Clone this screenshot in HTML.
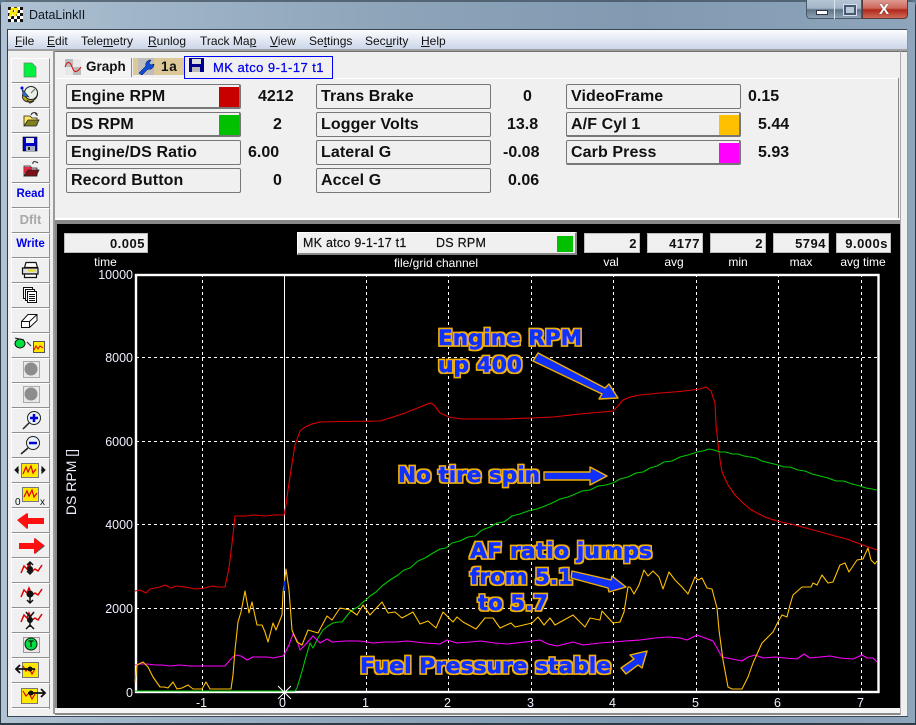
<!DOCTYPE html>
<html><head><meta charset="utf-8"><title>DataLinkII</title>
<style>
html,body{margin:0;padding:0;width:916px;height:725px;overflow:hidden;background:#5f7a94;font-family:"Liberation Sans",sans-serif}
#w{position:absolute;left:0;top:0;width:916px;height:725px;overflow:hidden;border-radius:7px 7px 0 0;background:linear-gradient(90deg,#b0c3d4 0,#a0b5c8 15%,#8ca3b8 45%,#819ab1 70%,#8ea5bb 100%)}
.a{position:absolute}
.t{position:absolute;white-space:nowrap;line-height:1}
.m{position:absolute;top:34px;font-size:12px;line-height:14px;color:#111;white-space:nowrap}
.m u{text-decoration:underline}
.b{position:absolute;left:11px;width:37px;height:23px;background:#f0f0f0;border-top:1px solid #fff;border-left:1px solid #fff;border-right:1px solid #909090;border-bottom:2px solid #909090;box-sizing:content-box}
.c{position:absolute;width:173px;height:23px;background:#f0f0f0;border:1px solid #777;border-radius:2px;box-sizing:content-box}
.c.p{border-bottom:2px solid #777;border-right:2px solid #777;height:22px;width:172px}
.l{position:absolute;font-weight:bold;font-size:16px;line-height:16px;color:#111;white-space:nowrap;letter-spacing:.1px}
.s{position:absolute;width:20px;height:20px;top:87px;left:219px}
.v{position:absolute;font-weight:bold;font-size:16px;line-height:16px;color:#111;white-space:nowrap;text-align:right}
.st{position:absolute;top:233px;height:20px;background:#f0f0f0;border:1px solid #bbb;box-sizing:border-box;font-size:13px;font-weight:bold;text-align:right;line-height:19px;padding-right:2px;color:#111;letter-spacing:.5px}
.w{position:absolute;color:#fff;font-size:12px;line-height:12px;white-space:nowrap;text-align:center}
.y{position:absolute;color:#eef;font-size:12.5px;line-height:12px;right:783px;white-space:nowrap}
.x{position:absolute;top:697px;color:#eef;font-size:12.5px;line-height:12px;white-space:nowrap}
.rd{position:absolute;left:11px;width:39px;text-align:center;font-weight:bold;font-size:11.5px;line-height:12px;color:#0000e8}
</style></head><body>
<div id="w">
<!-- title -->
<div class="a" style="left:0;top:0;width:916px;height:2px;background:#3b4a58;opacity:.7"></div>
<div class="a" style="left:0;top:0;width:1px;height:725px;background:#2e3a46"></div>
<div class="a" style="left:915px;top:0;width:1px;height:725px;background:#2e3a46"></div>
<div class="a" style="left:0;top:723px;width:916px;height:2px;background:#2e3a46"></div>
<div class="t" style="left:29px;top:9px;font-size:12.5px;color:#101820">DataLinkII</div>
<!-- caption buttons -->
<div class="a" style="left:806px;top:0;width:56px;height:19px;border:1px solid #4a5a6a;border-top:none;border-radius:0 0 0 4px;box-sizing:border-box;background:linear-gradient(#b4c5d5 0,#a4b6c8 45%,#5f7488 55%,#8ea3b6 100%)"></div>
<div class="a" style="left:834px;top:0;width:1px;height:19px;background:#dbe5ee"></div>
<div class="a" style="left:862px;top:0;width:46px;height:19px;border:1px solid #5a3a3a;border-top:none;border-radius:0 0 4px 0;box-sizing:border-box;background:linear-gradient(#dc9a90 0,#d0685c 45%,#b0281c 55%,#d06a58 100%)"></div>
<div class="a" style="left:816px;top:10px;width:10px;height:3px;background:#fff;border:1px solid #334"></div>
<div class="a" style="left:844px;top:5px;width:8px;height:6px;border:2px solid #445a70;background:#b8c8d8;box-sizing:content-box;outline:1px solid #dde"></div>
<div class="t" style="left:879px;top:2px;font-size:15px;font-weight:bold;color:#fff;text-shadow:0 0 1px #333">X</div>

<!-- client -->
<div class="a" style="left:7px;top:29px;width:1px;height:688px;background:#2e3a46"></div>
<div class="a" style="left:8px;top:29px;width:900px;height:687px;background:#f0f0f0"></div>
<div class="a" style="left:8px;top:29px;width:900px;height:1px;background:#3a4654"></div>
<div class="a" style="left:8px;top:30px;width:900px;height:19px;background:linear-gradient(#fbfcfe,#ccd6e9)"></div>
<div class="a" style="left:8px;top:49px;width:900px;height:2px;background:#a0a0a0"></div>
<div class="m" style="left:15px"><u>F</u>ile</div>
<div class="m" style="left:47px"><u>E</u>dit</div>
<div class="m" style="left:81px">Tele<u>m</u>etry</div>
<div class="m" style="left:148px"><u>R</u>unlog</div>
<div class="m" style="left:200px">Track Ma<u>p</u></div>
<div class="m" style="left:270px"><u>V</u>iew</div>
<div class="m" style="left:309px">Se<u>t</u>tings</div>
<div class="m" style="left:365px">Sec<u>u</u>rity</div>
<div class="m" style="left:421px"><u>H</u>elp</div>

<!-- toolbar buttons -->
<div class="b" style="top:58px"></div><div class="b" style="top:83px"></div><div class="b" style="top:108px"></div><div class="b" style="top:133px"></div><div class="b" style="top:158px"></div><div class="b" style="top:183px"></div><div class="b" style="top:208px"></div><div class="b" style="top:233px"></div><div class="b" style="top:258px"></div><div class="b" style="top:283px"></div><div class="b" style="top:308px"></div><div class="b" style="top:333px"></div><div class="b" style="top:358px"></div><div class="b" style="top:383px"></div><div class="b" style="top:408px"></div><div class="b" style="top:433px"></div><div class="b" style="top:458px"></div><div class="b" style="top:483px"></div><div class="b" style="top:508px"></div><div class="b" style="top:533px"></div><div class="b" style="top:558px"></div><div class="b" style="top:583px"></div><div class="b" style="top:608px"></div><div class="b" style="top:633px"></div><div class="b" style="top:658px"></div><div class="b" style="top:683px"></div>
<div class="a" style="left:11px;top:708px;width:38px;height:6px;background:#f0f0f0;border-top:1px solid #fff"></div>
<div class="rd" style="top:188px">Read</div>
<div class="rd" style="top:214px;color:#a8a8a8;font-size:13px">Dflt</div>
<div class="rd" style="top:238px">Write</div>

<!-- main panel -->
<div class="a" style="left:53px;top:51px;width:2px;height:663px;background:#9a9a9a"></div>
<div class="a" style="left:55px;top:51px;width:853px;height:3px;background:#f0f0f0;border-top:1px solid #707070;box-sizing:border-box"></div>
<div class="a" style="left:56px;top:78px;width:842px;height:1px;background:#fff"></div>
<div class="a" style="left:898px;top:78px;width:1px;height:140px;background:#888"></div>
<div class="a" style="left:55px;top:218px;width:845px;height:2px;background:#fff"></div>
<div class="a" style="left:55px;top:220px;width:845px;height:4px;background:#888"></div>

<!-- tabs -->
<div class="a" style="left:64px;top:58px;width:68px;height:19px;background:#f3f3f3;border-right:1px solid #888;box-sizing:border-box"></div>
<div class="t" style="left:86px;top:60px;font-size:13.5px;font-weight:bold;color:#111">Graph</div>
<div class="a" style="left:133px;top:58px;width:51px;height:17px;background:#dcc997"></div>
<div class="a" style="left:138px;top:58px;width:16px;height:17px;background:#bdbdbd"></div>
<div class="t" style="left:161px;top:60px;font-size:13.5px;font-weight:bold;color:#111;letter-spacing:.8px">1a</div>
<div class="a" style="left:184px;top:56px;width:149px;height:23px;background:#f0f0f0;border:1px solid #0000ff;box-sizing:border-box"></div>
<div class="t" style="left:213px;top:61px;font-size:13px;color:#0000ee;letter-spacing:.45px;-webkit-text-stroke:.25px #0000ee">MK atco 9-1-17 t1</div>

<!-- channel boxes -->
<div class="c p" style="left:66px;top:84px"></div><div class="l" style="left:71px;top:89px">Engine RPM</div><div class="s" style="background:#c80000;top:87px"></div>
<div class="c p" style="left:66px;top:112px"></div><div class="l" style="left:71px;top:117px">DS RPM</div><div class="s" style="background:#00c000;top:115px"></div>
<div class="c" style="left:66px;top:140px"></div><div class="l" style="left:71px;top:145px">Engine/DS Ratio</div>
<div class="c" style="left:66px;top:168px"></div><div class="l" style="left:71px;top:173px">Record Button</div>
<div class="c" style="left:316px;top:84px"></div><div class="l" style="left:321px;top:89px">Trans Brake</div>
<div class="c" style="left:316px;top:112px"></div><div class="l" style="left:321px;top:117px">Logger Volts</div>
<div class="c" style="left:316px;top:140px"></div><div class="l" style="left:321px;top:145px">Lateral G</div>
<div class="c" style="left:316px;top:168px"></div><div class="l" style="left:321px;top:173px">Accel G</div>
<div class="c" style="left:566px;top:84px"></div><div class="l" style="left:571px;top:89px">VideoFrame</div>
<div class="c p" style="left:566px;top:112px"></div><div class="l" style="left:571px;top:117px">A/F Cyl 1</div><div class="s" style="background:#ffc000;left:719px;top:115px"></div>
<div class="c p" style="left:566px;top:140px"></div><div class="l" style="left:571px;top:145px">Carb Press</div><div class="s" style="background:#ff00ff;left:719px;top:143px"></div>

<div class="v" style="left:258px;top:89px">4212</div>
<div class="v" style="left:273px;top:117px">2</div>
<div class="v" style="left:248px;top:145px">6.00</div>
<div class="v" style="left:273px;top:173px">0</div>
<div class="v" style="left:523px;top:89px">0</div>
<div class="v" style="left:507px;top:117px">13.8</div>
<div class="v" style="left:503px;top:145px">-0.08</div>
<div class="v" style="left:508px;top:173px">0.06</div>
<div class="v" style="left:748px;top:89px">0.15</div>
<div class="v" style="left:758px;top:117px">5.44</div>
<div class="v" style="left:758px;top:145px">5.93</div>

<!-- black graph -->
<div class="a" style="left:55px;top:224px;width:2px;height:484px;background:#888"></div>
<div class="a" style="left:57px;top:224px;width:843px;height:484px;background:#000"></div>
<div class="a" style="left:55px;top:708px;width:846px;height:5px;background:#f4f4f4"></div>
<div class="a" style="left:55px;top:713px;width:846px;height:2px;background:#8a8a8a"></div>
<div class="a" style="left:900px;top:51px;width:1px;height:664px;background:#aaa"></div>
<div class="a" style="left:907px;top:29px;width:1px;height:687px;background:#8a96a4"></div>
<div class="a" style="left:7px;top:716px;width:901px;height:1px;background:#3a4654"></div>

<div class="st" style="left:64px;width:84px">0.005</div>
<div class="a" style="left:297px;top:232px;width:280px;height:23px;background:#f0f0f0;border:1px solid #fff;border-right:2px solid #888;border-bottom:2px solid #888;box-sizing:border-box"></div>
<div class="t" style="left:303px;top:237px;font-size:12.5px;color:#111;letter-spacing:.25px;-webkit-text-stroke:.2px #111">MK atco 9-1-17 t1</div>
<div class="t" style="left:436px;top:237px;font-size:12.5px;color:#111;letter-spacing:.25px;-webkit-text-stroke:.2px #111">DS RPM</div>
<div class="a" style="left:557px;top:236px;width:16px;height:16px;background:#00c000"></div>
<div class="st" style="left:584px;width:56px">2</div>
<div class="st" style="left:647px;width:56px">4177</div>
<div class="st" style="left:710px;width:56px">2</div>
<div class="st" style="left:773px;width:56px">5794</div>
<div class="st" style="left:836px;width:55px">9.000s</div>

<div class="w" style="left:73px;width:65px;top:256px">time</div>
<div class="w" style="left:376px;width:120px;top:257px">file/grid channel</div>
<div class="w" style="left:591px;width:40px;top:256px">val</div>
<div class="w" style="left:654px;width:40px;top:256px">avg</div>
<div class="w" style="left:718px;width:40px;top:256px">min</div>
<div class="w" style="left:781px;width:40px;top:256px">max</div>
<div class="w" style="left:833px;width:60px;top:256px">avg time</div>

<div class="y" style="top:269px">10000</div>
<div class="y" style="top:352px">8000</div>
<div class="y" style="top:436px">6000</div>
<div class="y" style="top:519px">4000</div>
<div class="y" style="top:603px">2000</div>
<div class="y" style="top:687px">0</div>
<div class="x" style="left:196px">-1</div>
<div class="x" style="left:279px">0</div>
<div class="x" style="left:362px">1</div>
<div class="x" style="left:444px">2</div>
<div class="x" style="left:527px">3</div>
<div class="x" style="left:609px">4</div>
<div class="x" style="left:692px">5</div>
<div class="x" style="left:774px">6</div>
<div class="x" style="left:857px">7</div>
<div class="w" style="left:31px;top:476px;width:80px;transform:rotate(-90deg);font-size:14px;color:#eef">DS RPM []</div>

<svg class="a" style="left:0;top:0" width="916" height="725" viewBox="0 0 916 725">
<defs>
<filter id="o" filterUnits="userSpaceOnUse" x="340" y="310" width="340" height="380">
<feMorphology in="SourceAlpha" operator="dilate" radius="1.5" result="d"/>
<feFlood flood-color="#f0b000"/>
<feComposite in2="d" operator="in" result="g"/>
<feMerge><feMergeNode in="g"/><feMergeNode in="SourceGraphic"/></feMerge>
</filter>
</defs>
<!-- title icon -->
<g>
<rect x="8" y="7" width="15" height="15" fill="#fff"/>
<path d="M8 7h3v3H8zM14 7h3v3h-3zM20 7h3v3h-3zM11 10h3v3h-3zM17 10h3v3h-3zM8 13h3v3H8zM14 13h3v3h-3zM20 13h3v3h-3zM11 16h3v3h-3zM17 16h3v3h-3zM8 19h3v3H8zM14 19h3v3h-3zM20 19h3v3h-3z" fill="#111"/>
<path d="M10 17l2-8h5l-1 4h-3l3 3" fill="none" stroke="#ffe800" stroke-width="2.600"/>
</g>
<!-- grid -->
<g stroke="#fff" stroke-width="1" stroke-dasharray="3 3" fill="none">
<path d="M136 357.5H878M136 441.5H878M136 524.5H878M136 608.5H878"/>
<path d="M202.5 274V692M366.5 274V692M448.5 274V692M531.5 274V692M613.5 274V692M696.5 274V692M778.5 274V692M861.5 274V692"/>
</g>
<path d="M284.5 274V692" stroke="#fff" stroke-width="1"/>
<rect x="136" y="275" width="742.5" height="417" fill="none" stroke="#fff" stroke-width="2.4"/>

<!-- traces -->
<g fill="none" stroke-width="1.1" stroke-linejoin="round">
<polyline stroke="#e00000" points="135,591 140,590 146,593 150,589 160,587 165,585 171,588 176,586 185,587 195,589 205,588 212,586 218,587 225,587 229,568 233,535 235,516 245,516 255,515 265,516 275,515 284,515 286,505 288,490 291,470 295,445 300,431 305,427 312,424 320,422 340,421.5 380,421 390,418 405,413 420,407 430,403 434,405 440,413 450,417.5 463,419 503,419 531,418 553,417 580,414 613,411 618,406 623,400 630,397 640,395 660,393 680,391.5 700,389 706,387 711,391 715,403 716,425 718,443 720,460 722,472 728,485 735,495 743,503 750,509 757,513 765,517 777,521 795,525 817,531 835,536 847,539 860,544 877,550"/>
<polyline stroke="#00c800" points="135,691 295,691 297,688 300,678 303,668 305,660 308,650 310,643 313,648 318,638 323,630 328,626 333,623 338,622 342,622 346,617 350,612 354,609 358,607 363,602 366,600 370,596 376,592 382,586 390,580 398,575 404,570 410,568 418,561 425,558 433,553 440,549 446,548 452,543 460,541 468,537 475,536 482,530 490,527 497,523 504,522 512,516 520,514 528,511 537,509 545,506 552,503 560,499 568,497 573,495 582,491 590,490 598,486 606,485 613,483 620,479 628,477 636,473 643,472 650,468 657,466 664,462 672,461 680,457 688,455 697,452 703,451 709,449 714,450 720,452 726,452 732,454 738,454 744,456 750,457 756,458 762,461 770,463 778,465 784,467 790,467 798,470 805,471 812,474 820,476 828,478 836,481 844,481 852,484 860,486 866,488 872,489 877,490"/>
<polyline stroke="#ff00ff" points="135,665 140,664 147,664 155,665 162,665 170,666 180,665 190,666 200,666 225,666 230,660 235,655 241,656 247,660 253,657 260,657 267,657 273,658 278,657 283,656 285,653 289,645 293,634 297,640 300,650 305,645 313,636 320,643 327,639 332,642 345,641 360,641 373,643 385,642 395,642 407,641 425,643 440,644 447,640 457,643 470,642 480,641 495,643 507,644 525,642 540,640 548,644 557,646 565,644 573,642 583,645 600,643 613,642 625,641 640,640 655,638 668,637 680,638 687,640 697,635 705,638 713,641 717,648 722,657 732,659 742,661 748,657 755,655 763,658 775,657 785,658 797,659 804,654 810,658 820,657 830,656 840,658 853,659 862,655 867,658 873,658 877,662"/>
<polyline stroke="#ffc000" points="135,682 137,665 143,662 148,667 153,677 160,687 164,687 168,688 173,682 177,689 182,688 188,685 193,689 202,689 206,682 210,689 231,689 233,675 235,650 238,622 241,612 245,591 249,613 252,602 257,625 262,625 265,632 268,642 273,623 276,630 282,615 283,593 286,569 289,590 292,630 297,642 302,645 308,630 318,633 327,616 332,620 340,608 350,610 357,615 363,605 370,615 382,602 388,613 395,612 402,618 413,612 420,624 428,621 436,628 443,612 453,622 457,617 463,622 476,629 485,618 493,618 500,628 511,623 515,627 532,623 538,617 544,625 550,618 555,625 573,615 585,627 590,618 600,620 602,611 613,623 620,622 624,612 628,587 630,587 634,594 639,585 644,570 648,576 653,571 659,577 663,589 669,572 675,580 682,587 688,594 695,577 698,580 702,578 707,588 712,589 717,608 719,630 723,660 728,687 732,689 742,689 748,677 753,663 762,643 773,632 778,622 782,615 787,617 790,605 793,595 802,587 811,587 813,583 817,585 822,575 828,583 833,582 840,565 845,563 849,572 857,560 863,559 868,548 871,560 875,564 877,561"/>
</g>
<rect x="283.5" y="581" width="2" height="10" fill="#0030e0"/>
<path d="M278 686l13 13M291 686l-13 13M284.5 684v16M276 692.500h16" stroke="#fff" stroke-width="1"/>

<!-- annotation arrows -->
<g fill="#1030f8" stroke="#f0b000" stroke-width="1.400" stroke-linejoin="round">
<polygon points="533,361 538,353 605,388 609,384 618,398 599,399 602,394"/>
<polygon points="544,472 590,472 590,467 607,476 590,485 590,480 544,480"/>
<polygon points="572,571 571,578 608,588 609,592 626,587 612,576 611,580"/>
<polygon points="621,668 626,674 638,665 642,668 647,651 630,655 634,659"/>
</g>
<!-- annotation text -->
<g font-family="'DejaVu Sans',sans-serif" font-weight="bold" font-size="21" fill="#1030f8" stroke="#1030f8" stroke-width=".7" stroke-linejoin="round" filter="url(#o)">
<text x="438" y="345" textLength="144" lengthAdjust="spacingAndGlyphs">Engine RPM</text>
<text x="438" y="372" textLength="84" lengthAdjust="spacingAndGlyphs">up 400</text>
<text x="398" y="482" textLength="142" lengthAdjust="spacingAndGlyphs">No tire spin</text>
<text x="470" y="558" textLength="182" lengthAdjust="spacingAndGlyphs">AF ratio jumps</text>
<text x="470" y="584" textLength="103" lengthAdjust="spacingAndGlyphs">from 5.1</text>
<text x="478" y="610" textLength="70" lengthAdjust="spacingAndGlyphs">to 5.7</text>
<text x="360" y="673" textLength="251" lengthAdjust="spacingAndGlyphs">Fuel Pressure stable</text>
</g>

<!-- tab icons -->
<rect x="65" y="59" width="8" height="8" fill="#bbb"/><rect x="73" y="67" width="8" height="8" fill="#bbb"/><rect x="73" y="59" width="8" height="8" fill="#e8e8e8"/><rect x="65" y="67" width="8" height="8" fill="#e8e8e8"/>
<path d="M65 67c2-6 5-6 7 0s5 6 9 0" fill="none" stroke="#e00000" stroke-width="1"/>
<path d="M139 73l7-7c-1-3 1-6 5-6l-2 3 2 2 3-1c0 4-3 6-6 5l-6 6z" fill="#0c4cd8" stroke="#003" stroke-width=".5"/>
<path d="M189 58h15v14h-15z" fill="#00008a"/><rect x="192" y="59" width="9" height="5" fill="#ddd"/><rect x="192" y="67" width="8" height="5" fill="#bbb"/>

<!-- toolbar icons -->
<path d="M24 63h8l4 4v10H24z" fill="#00f040" stroke="#5a8a60" stroke-width=".7"/>
<!-- dish -->
<ellipse cx="30" cy="95" rx="8" ry="6.500" fill="#b8a820" stroke="#222" stroke-width=".8" transform="rotate(-30 30 95)"/>
<circle cx="31" cy="93" r="6.500" fill="#e8f0e8" stroke="#222" stroke-width="1"/><path d="M22 89l7 8-6-1z" fill="#2a6ac8" stroke="#234" stroke-width=".6"/><circle cx="22" cy="88" r="1.500" fill="#00f"/><path d="M31 93l4-4" stroke="#666"/><path d="M27 100l3 3 4-2" fill="none" stroke="#333" stroke-width="1.200"/>
<!-- open folder -->
<path d="M24 116h6l2 2h5v7H24z" fill="#ffe860" stroke="#222" stroke-width=".8"/><path d="M24 126l4-6h11l-3 6z" fill="#808020" stroke="#222" stroke-width=".8"/><path d="M31 115c1-3 5-3 6-1M37 114l-2 0M37 114l0 2" fill="none" stroke="#222"/>
<!-- floppy -->
<rect x="23" y="137" width="14" height="14" fill="#0000c8" stroke="#000" stroke-width=".6"/><rect x="26" y="138" width="8" height="5" fill="#e8e8e8"/><rect x="26" y="146" width="9" height="5" fill="#a8b0c0"/><rect x="28" y="147" width="2" height="3" fill="#222"/>
<!-- red folder -->
<path d="M24 166h6l2 2h5v8H24z" fill="#e0c0c0" stroke="#222" stroke-width=".8"/><path d="M24 167h8v6h-8z" fill="#e01030" opacity=".85"/><path d="M24 176l4-6h11l-3 6z" fill="#801018" stroke="#222" stroke-width=".8"/><path d="M33 164c-1-3 3-3 5-1" fill="none" stroke="#222"/>
<!-- printer -->
<path d="M26 262.500h10l1.500 5h-13z" fill="#fff" stroke="#111" stroke-width="1.200"/><path d="M22.500 268h15.500v6H22.500z" fill="#e0e0e0" stroke="#111" stroke-width="1.200"/><rect x="28" y="269.500" width="8" height="2" fill="#e8d820"/><path d="M24.500 274h12v3.500h-12z" fill="#fff" stroke="#111" stroke-width="1.200"/>
<!-- copy -->
<path d="M23.500 287.500h9v11h-9z" fill="#fff" stroke="#111"/><path d="M25.500 289.500h9v11h-9z" fill="#fff" stroke="#111"/><path d="M27.500 291.500h9v11h-9z" fill="#fff" stroke="#111"/><path d="M29 294.500h6M29 296.500h6M29 298.500h6M29 300.500h6" stroke="#111"/>
<!-- eraser -->
<path d="M21.500 321.500l6.500-7h9l-7.500 7zM21.500 321.500h8v6h-8zM29.500 321.500l7.500-7v6l-7.500 7z" fill="#fff" stroke="#111" stroke-linejoin="round"/>
<!-- link -->
<ellipse cx="20" cy="343.500" rx="5" ry="4.500" fill="#00e040" stroke="#111"/><path d="M15 338l9 2" stroke="#111"/><path d="M27 342l4 4" stroke="#333" stroke-width="1.200"/><rect x="33.500" y="341.500" width="11" height="11" fill="#ffe800" stroke="#555"/><path d="M34 350l2-4 2 3 2-3 3 2" fill="none" stroke="#d00"/>
<!-- grey -->
<rect x="23.500" y="361.500" width="16" height="16" fill="#e8e8e8" stroke="#aaa"/><circle cx="31" cy="369" r="6.500" fill="#8c8c8c"/>
<rect x="23.500" y="386.500" width="16" height="16" fill="#e8e8e8" stroke="#aaa"/><circle cx="31" cy="394" r="6.500" fill="#8c8c8c"/>
<!-- zoom + -->
<circle cx="34" cy="418" r="6.500" fill="#e8f0f8" stroke="#222"/><path d="M30 418h8M34 414v8" stroke="#0000d0" stroke-width="2.500"/><path d="M29 423l-6 6" stroke="#222" stroke-width="1.500"/>
<!-- zoom - -->
<circle cx="33" cy="443" r="6.500" fill="#e8f0f8" stroke="#222"/><path d="M29 443h8" stroke="#0000d0" stroke-width="2.500"/><path d="M28 448l-7 6" stroke="#222" stroke-width="1.500"/>
<!-- h zoom -->
<rect x="21.500" y="463.500" width="17" height="14" fill="#ffe800" stroke="#777"/><path d="M23 474l3-7 2 5 3-6 2 7 3-4" fill="none" stroke="#e00000" stroke-width="1.200"/><path d="M15 470h4M15 470l3-3v6zM41 470h4M45 470l-3-3v6z" stroke="#111" fill="#111"/>
<!-- 0 x -->
<rect x="22.500" y="487.500" width="16" height="14" fill="#ffe800" stroke="#777"/><path d="M24 497l3-6 2 5 3-6 2 7 3-4" fill="none" stroke="#e00000" stroke-width="1.200"/>
<text x="15" y="505" font-size="10" fill="#111" font-family="'Liberation Sans',sans-serif">0</text><text x="40" y="505" font-size="10" fill="#111" font-family="'Liberation Sans',sans-serif">x</text>
<!-- arrows -->
<path d="M18 521l10 8v-5h16v-6H28v-5z" fill="#555"/>
<path d="M17 520l10-7v5h16v6H27v5z" fill="#ff1010"/>
<path d="M45 546l-10 8v-5H20v-6h15v-5z" fill="#555"/>
<path d="M44 545l-10-7v5H19v6h15v5z" fill="#ff1010"/>
<!-- up down etc -->
<g fill="none" stroke="#e00000" stroke-width="1.500">
<path d="M21 573l3-7 3 3 2-5 3 7 3-2 3 2 4-6"/><path d="M21 597l3-7 3 3 2-5 3 7 3-2 3 2 4-6"/><path d="M21 622l3-7 3 3 2-5 3 7 3-2 3 2 4-6"/>
</g>
<g stroke="#111" fill="#111">
<path d="M30 562v12M27 565l3-3 3 3M27 571l3 3 3-3" fill="none" stroke-width="1.500"/><circle cx="30" cy="569" r="2.500"/>
<path d="M30 592v11M27 600l3 3 3-3" fill="none" stroke-width="1.500"/><circle cx="30" cy="594" r="3"/>
<path d="M26 612l4 5 4-5M30 617v10M26 629l4-4 4 4" fill="none" stroke-width="1.500"/><circle cx="30" cy="620" r="2.500"/>
</g>
<!-- T -->
<rect x="23.500" y="637.500" width="16" height="15" fill="#e8e8e8" stroke="#999"/><circle cx="31" cy="644" r="6" fill="#00e040" stroke="#111"/><path d="M28.500 641h5M31 641v6" stroke="#111" stroke-width="1.200"/>
<!-- left/right graph -->
<rect x="22.500" y="662.500" width="16" height="15" fill="#ffe800" stroke="#777"/><path d="M23 666l3 5 3-3 3 6 3-5" fill="none" stroke="#e00000" stroke-width="1.200"/><path d="M16 669h19M20 665l-4 4 4 4" fill="none" stroke="#111" stroke-width="1.800"/><circle cx="30" cy="669" r="2.500" fill="#111"/>
<rect x="21.500" y="688.500" width="16" height="15" fill="#ffe800" stroke="#777"/><path d="M23 691l3 5 3-3 3 6 3-5" fill="none" stroke="#e00000" stroke-width="1.200"/><path d="M28 693h17M41 689l4 4-4 4" fill="none" stroke="#111" stroke-width="1.800"/><circle cx="31" cy="693" r="2.500" fill="#111"/>
</svg>
</div>
</body></html>
